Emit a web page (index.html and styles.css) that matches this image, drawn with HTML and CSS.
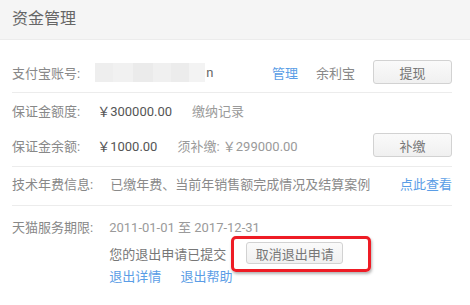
FILE: index.html
```html
<!DOCTYPE html>
<html>
  <head>
    <meta charset="UTF-8" />
    <title>资金管理</title>
    <link rel="stylesheet" href="styles.css">
  </head>
  <body>
    <div class="header">资金管理</div>
    <div class="content">
      <div class="section sec-account">
        <div class="row">
          <span class="label">支付宝账号:</span>
          <span class="masked">
            <i class="m1"></i><i class="m2"></i><i class="m3"></i><i class="m4"></i><i class="m5"></i><i class="m6"></i>
          </span>
          <span class="masked-tail">n</span>
          <span class="spacer"></span>
          <a class="link">管理</a>
          <span class="plain">余利宝</span>
          <button class="btn btn-wide">提现</button>
        </div>
      </div>

      <div class="section sec-deposit">
        <div class="row line">
          <span class="label">保证金额度:</span>
          <span class="money">￥300000.00</span>
          <span class="muted gap">缴纳记录</span>
        </div>
        <div class="row">
          <span class="label">保证金余额:</span>
          <span class="money">￥1000.00</span>
          <span class="muted gap">须补缴: ￥299000.00</span>
          <span class="spacer"></span>
          <button class="btn btn-wide">补缴</button>
        </div>
      </div>

      <div class="section sec-fee">
        <div class="row line">
          <span class="label">技术年费信息:</span>
          <span class="desc">已缴年费、当前年销售额完成情况及结算案例</span>
          <span class="spacer"></span>
          <a class="link">点此查看</a>
        </div>
      </div>

      <div class="section sec-term">
        <div class="term">
          <span class="label">天猫服务期限:</span>
          <div class="term-body">
            <div class="line muted">2011-01-01 至 2017-12-31</div>
            <div class="exit-row">
              <span class="note">您的退出申请已提交</span>
              <span class="mark">
                <button class="btn btn-cancel">取消退出申请</button>
              </span>
            </div>
            <div class="line">
              <a class="link">退出详情</a>
              <a class="link second">退出帮助</a>
            </div>
          </div>
        </div>
      </div>
    </div>
  </body>
</html>
```

FILE: styles.css
```css
/* base */
html, body {
  margin: 0;
  padding: 0;
  background: #fff;
  font-family: Roboto, "Noto Sans CJK SC", sans-serif;
  font-size: 13px;
  color: #888;
}

/* title bar */
.header {
  height: 39px;
  line-height: 37px;
  padding-left: 12px;
  background: #f5f5f5;
  border-bottom: 1px solid #ececec;
  font-size: 16px;
  color: #666;
}

.content {
  padding: 0 18px 0 12px;
}

.section {
  border-bottom: 1px solid #ececec;
}

.sec-account {
  padding: 20px 0 8px;
}

.sec-deposit {
  padding: 10px 0 9px;
}

.sec-fee {
  padding: 9px 0 11px;
}

.sec-term {
  padding: 13px 0 0;
  border-bottom: none;
}

.row {
  display: flex;
  align-items: center;
}

.line {
  height: 18px;
  line-height: 18px;
}

.sec-deposit .line {
  margin-bottom: 12px;
}

.label {
  color: #888;
  margin-right: 15px;
  white-space: nowrap;
}

.spacer {
  flex: 1;
}

/* blurred account number */
.masked {
  display: flex;
  height: 19px;
  filter: blur(0.6px);
}

.masked i {
  display: block;
  height: 100%;
}

.m1 { width: 18px; background: #eeeeee; }
.m2 { width: 20px; background: #f1f1f1; }
.m3 { width: 20px; background: #ebebeb; }
.m4 { width: 18px; background: #f0f0f0; }
.m5 { width: 18px; background: #ececec; }
.m6 { width: 16px; background: #f3f3f3; }

.masked-tail {
  color: #666;
  margin-left: 1px;
}

.link {
  color: #5a9de6;
  cursor: pointer;
}

.plain {
  color: #888;
  margin-left: 18px;
  margin-right: 18px;
}

.money {
  color: #555;
  margin-left: 2px;
}

.muted {
  color: #9a9a9a;
}

.gap {
  margin-left: 20px;
}

.desc {
  color: #8a8a8a;
  margin-left: 2px;
}

/* buttons */
.btn {
  font-family: Roboto, "Noto Sans CJK SC", sans-serif;
  font-size: 13px;
  color: #777;
  background: linear-gradient(#fafafa, #f0f0f0);
  border: 1px solid #d2d2d2;
  border-radius: 3px;
  padding: 0;
  cursor: pointer;
}

.btn-wide {
  width: 79px;
  height: 24px;
}

.btn-cancel {
  display: block;
  width: 97px;
  height: 22px;
}

/* service term block */
.term {
  display: flex;
}

.term .label {
  line-height: 18px;
  margin-right: 16px;
}

.exit-row {
  display: flex;
  align-items: center;
  margin: 5px 0 4px;
}

.note {
  color: #777;
}

/* red annotation around the cancel button */
.mark {
  position: relative;
  margin-left: 20px;
}

.mark::after {
  content: "";
  position: absolute;
  left: -15px;
  right: -28px;
  top: -6px;
  bottom: -8px;
  border: 3px solid #ee1c25;
  border-radius: 5px;
  box-shadow: 1px 2px 3px rgba(0, 0, 0, 0.3);
}

.second {
  margin-left: 16px;
}
```
